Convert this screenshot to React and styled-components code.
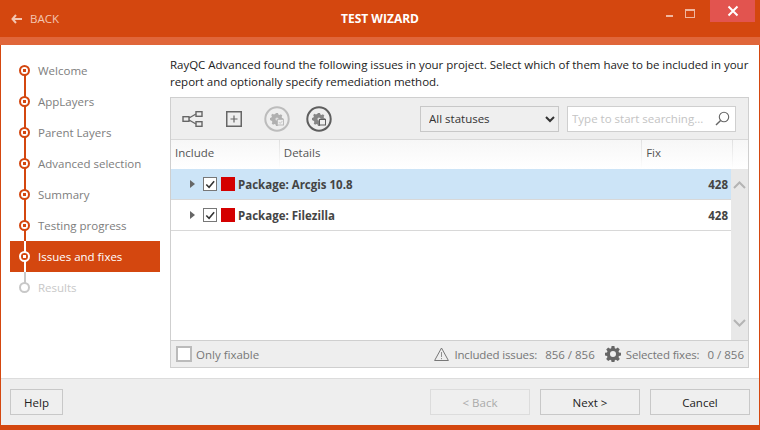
import React from 'react'
import styled, { createGlobalStyle } from 'styled-components'

const STEPS = ['Welcome', 'AppLayers', 'Parent Layers', 'Advanced selection', 'Summary', 'Testing progress', 'Issues and fixes', 'Results']
const ACTIVE = 6

const ArrowLeft = () => (
  <svg width="11" height="10" viewBox="0 0 11 10">
    <path d="M5 1 1.5 5 5 9M2 5h9" fill="none" stroke="currentColor" strokeWidth="2" />
  </svg>
)

const NetworkIcon = () => (
  <svg width="22" height="18" viewBox="0 0 22 18" fill="none" stroke="#666" strokeWidth="1.4">
    <rect x="1" y="6.7" width="6" height="4.6" />
    <rect x="14" y="1.7" width="6" height="4.6" />
    <rect x="14" y="11.7" width="6" height="4.6" />
    <path d="M7 8 14 4M7 10l7 4" />
  </svg>
)

const PlusBoxIcon = () => (
  <svg width="16" height="16" viewBox="0 0 16 16" fill="none" stroke="#666">
    <rect x="0.75" y="0.75" width="14.5" height="14.5" strokeWidth="1.5" />
    <path d="M4.5 8h7M8 4.5v7" strokeWidth="1.2" />
  </svg>
)

const CircleGear = ({ ring, gear, badge }) => (
  <svg width="26" height="26" viewBox="0 0 26 26">
    <circle cx="13" cy="13" r="11.7" fill="none" stroke={ring} strokeWidth="2" />
    <path
      fill={gear}
      d="M12 7h2l.4 1.4 1.2.5 1.3-.7 1.4 1.4-.7 1.3.5 1.2 1.4.4v2l-1.4.4-.5 1.2.7 1.3-1.4 1.4-1.3-.7-1.2.5-.4 1.4h-2l-.4-1.4-1.2-.5-1.3.7-1.4-1.4.7-1.3-.5-1.2L6 14v-2l1.4-.4.5-1.2-.7-1.3 1.4-1.4 1.3.7 1.2-.5z"
    />
    <circle cx="13" cy="13" r="1.6" fill="#ddd" />
    <rect x="13.5" y="13.5" width="6" height="5.5" fill="#eee" stroke={ring} strokeWidth="1" />
    {badge && <path d="M15 16.2l1.2 1.2 2-2.2" fill="none" stroke={ring} strokeWidth="0.9" />}
  </svg>
)

const SearchIcon = () => (
  <svg width="15" height="15" viewBox="0 0 15 15" fill="none" stroke="#666" strokeWidth="1.1">
    <circle cx="9" cy="6" r="4.7" />
    <path d="M5.6 9.4 1 14" strokeWidth="1.4" />
  </svg>
)

const Chevron = ({ up }) => (
  <svg width="13" height="8" viewBox="0 0 13 8">
    <path d={up ? 'M1 7 6.5 1.5 12 7' : 'M1 1l5.5 5.5L12 1'} fill="none" stroke="#b4b4b4" strokeWidth="2" />
  </svg>
)

const Warning = () => (
  <svg width="15" height="14" viewBox="0 0 15 14" fill="none" stroke="#777">
    <path d="M7.5 1 14.4 13.5H.6z" />
    <path d="M7.5 5v5M7.5 11v1.2" strokeWidth="0.8" />
  </svg>
)

const GearIcon = () => (
  <svg width="16" height="16" viewBox="0 0 16 16">
    <path
      fill="#666"
      fillRule="evenodd"
      d="M6.6 0h2.8l.4 2.2 1.1.5L12.8 1.4l2 2-1.3 1.9.5 1.1 2 .4v2.8l-2 .4-.5 1.1 1.3 1.9-2 2-1.9-1.3-1.1.5-.4 2H6.6l-.4-2-1.1-.5-1.9 1.3-2-2 1.3-1.9-.5-1.1-2-.4V6.8l2-.4.5-1.1-1.3-1.9 2-2 1.9 1.3 1.1-.5zM8 5a3 3 0 1 0 0 6 3 3 0 0 0 0-6z"
    />
  </svg>
)

const Tick = () => (
  <svg width="13" height="13" viewBox="0 0 13 13">
    <path d="M2.5 6.5l3 3 5.5-6.5" fill="none" stroke="#333" strokeWidth="1.7" />
  </svg>
)

const App = () => {
  return (
    <>
      <GlobalStyle />
      <Window>
        <TitleBar>
          <BackLink><ArrowLeft />BACK</BackLink>
          <Title>TEST WIZARD</Title>
          <WindowControls>
            <MinButton />
            <MaxButton />
            <CloseButton>
              <svg width="12" height="12" viewBox="0 0 12 12">
                <path d="M1.5 1.5l9 9M10.5 1.5l-9 9" stroke="#fff" strokeWidth="2" />
              </svg>
            </CloseButton>
          </WindowControls>
        </TitleBar>
        <Strip />
        <Body>
          <Sidebar>
            {STEPS.map((step, i) => (
              <Step key={step} $active={i === ACTIVE} $pending={i > ACTIVE}>
                <Rail $first={i === 0} $last={i === STEPS.length - 1} $active={i === ACTIVE} $pending={i > ACTIVE}>
                  <Dot $active={i === ACTIVE} $pending={i > ACTIVE} />
                </Rail>
                {step}
              </Step>
            ))}
          </Sidebar>
          <Main>
            <Intro>
              RayQC Advanced found the following issues in your project. Select which of them have to be included in your
              <br />
              report and optionally specify remediation method.
            </Intro>
            <Panel>
              <Toolbar>
                <ToolIcons>
                  <NetworkIcon />
                  <PlusBoxIcon />
                  <CircleGroup>
                    <CircleGear ring="#bcbcbc" gear="#b0b0b0" badge />
                    <CircleGear ring="#5e5e5e" gear="#858585" />
                  </CircleGroup>
                </ToolIcons>
                <StatusSelect defaultValue="all">
                  <option value="all">All statuses</option>
                </StatusSelect>
                <SearchBox>
                  <SearchInput placeholder="Type to start searching..." />
                  <SearchIcon />
                </SearchBox>
              </Toolbar>
              <HeaderRow>
                <HeaderCell $width={109}>Include</HeaderCell>
                <HeaderCell $width={363}>Details</HeaderCell>
                <HeaderCell $width={91}>Fix</HeaderCell>
                <HeaderCell $width={15} />
              </HeaderRow>
              <ListArea>
                <Rows>
                  <Row $selected>
                    <Expander />
                    <Check><Tick /></Check>
                    <Swatch />
                    <RowName>Package: Arcgis 10.8</RowName>
                    <RowCount>428</RowCount>
                  </Row>
                  <Row>
                    <Expander />
                    <Check><Tick /></Check>
                    <Swatch />
                    <RowName>Package: Filezilla</RowName>
                    <RowCount>428</RowCount>
                  </Row>
                </Rows>
                <ScrollBar>
                  <Chevron up />
                  <Chevron />
                </ScrollBar>
              </ListArea>
              <StatusBar>
                <EmptyCheck />
                <StatusText>Only fixable</StatusText>
                <StatusRight>
                  <Warning />
                  <StatusText $tight>Included issues:</StatusText>
                  <Count>856 / 856</Count>
                  <GearSlot><GearIcon /></GearSlot>
                  <StatusText $tight>Selected fixes:</StatusText>
                  <Count>0 / 856</Count>
                </StatusRight>
              </StatusBar>
            </Panel>
          </Main>
        </Body>
        <Footer>
          <FooterButton $width={53}>Help</FooterButton>
          <FooterRight>
            <FooterButton disabled>&lt; Back</FooterButton>
            <FooterButton>Next &gt;</FooterButton>
            <FooterButton>Cancel</FooterButton>
          </FooterRight>
        </Footer>
        <BottomEdge />
      </Window>
    </>
  )
}

export default App

const GlobalStyle = createGlobalStyle`
  html, body {
    margin: 0;
    padding: 0;
    background: #fff;
  }
  * {
    box-sizing: border-box;
  }
  body {
    font-family: "Open Sans", "Noto Sans", sans-serif;
    font-size: 11.5px;
  }
`
const Window = styled.div`
  display: flex;
  flex-direction: column;
  width: 760px;
  height: 430px;
  overflow: hidden;
  background: #fff;
`
const TitleBar = styled.div`
  display: grid;
  grid-template-columns: 1fr auto 1fr;
  height: 37px;
  background: #d4470f;
`
const BackLink = styled.div`
  display: flex;
  align-items: center;
  gap: 8px;
  padding-left: 11px;
  color: #f3c6b2;
`
const Title = styled.div`
  display: flex;
  align-items: center;
  color: #fff;
  font-size: 12px;
  font-weight: 700;
`
const WindowControls = styled.div`
  display: flex;
  justify-content: flex-end;
  align-items: flex-start;
  padding-right: 5px;
`
const MinButton = styled.div`
  width: 7px;
  height: 2px;
  margin: 15px 12px 0 0;
  background: #f0b79f;
`
const MaxButton = styled.div`
  width: 10px;
  height: 9px;
  margin: 9px 15px 0 0;
  border: 1px solid #f0b79f;
  border-top-width: 2px;
`
const CloseButton = styled.div`
  display: flex;
  justify-content: center;
  align-items: center;
  width: 45px;
  height: 22px;
  background: #e2544f;
`
const Strip = styled.div`
  height: 8px;
  background: #e0663a;
`
const Body = styled.div`
  display: flex;
  flex: 1;
  min-height: 0;
  border-left: 1px solid #d4470f;
  border-right: 1px solid #d4470f;
`
const Sidebar = styled.div`
  display: flex;
  flex-direction: column;
  width: 169px;
  padding: 10px 9px 0;
`
const Step = styled.div`
  display: flex;
  align-items: center;
  width: 150px;
  height: 31px;
  background: ${p => (p.$active ? '#d4470f' : 'transparent')};
  color: ${p => (p.$active ? '#fff' : p.$pending ? '#c8c8c8' : '#7d7d7d')};
`
const Rail = styled.div`
  display: flex;
  flex: none;
  justify-content: center;
  align-items: center;
  align-self: stretch;
  width: 29px;
  margin-right: -1px;
  background-image: linear-gradient(
    ${p => (p.$active ? '#fff' : p.$pending ? '#c8c8c8' : '#d4470f')},
    ${p => (p.$active ? '#fff' : p.$pending ? '#c8c8c8' : '#d4470f')}
  );
  background-repeat: no-repeat;
  background-size: 2px ${p => (p.$first || p.$last ? '50%' : '100%')};
  background-position: center ${p => (p.$first ? 'bottom' : 'top')};
`
const Dot = styled.div`
  width: 11px;
  height: 11px;
  border-radius: 50%;
  border: 2.5px solid ${p => (p.$active ? '#fff' : p.$pending ? '#c8c8c8' : '#d4470f')};
  background: ${p => {
    if (p.$pending) return '#fff'
    const inner = p.$active ? '#fff' : '#d4470f'
    const back = p.$active ? '#d4470f' : '#fff'
    return `radial-gradient(circle, ${inner} 0 1.5px, ${back} 2px)`
  }};
`
const Main = styled.div`
  display: flex;
  flex-direction: column;
  flex: 1;
  min-width: 0;
  padding: 10px 10px 10px 0;
`
const Intro = styled.div`
  height: 42px;
  padding-top: 1px;
  color: #222;
  line-height: 17px;
  letter-spacing: -0.02px;
  white-space: nowrap;
`
const Panel = styled.div`
  display: flex;
  flex-direction: column;
  flex: 1;
  min-height: 0;
  border: 1px solid #cfcfcf;
`
const Toolbar = styled.div`
  display: flex;
  flex: none;
  align-items: center;
  height: 42px;
  padding: 0 12px 0 11px;
  background: #eeeeee;
  border-bottom: 1px solid #d8d8d8;
`
const ToolIcons = styled.div`
  display: flex;
  flex: 1;
  align-items: center;
  gap: 22px;
`
const CircleGroup = styled.div`
  display: flex;
  gap: 16px;
`
const StatusSelect = styled.select`
  width: 139px;
  height: 26px;
  padding-left: 4px;
  margin-right: 8px;
  border: 1px solid #c8c8c8;
  border-radius: 0;
  background: #efefef;
  color: #333;
  font-family: inherit;
  font-size: 11.5px;
`
const SearchBox = styled.div`
  display: flex;
  align-items: center;
  width: 169px;
  height: 26px;
  padding: 0 5px 0 4px;
  border: 1px solid #cfcfcf;
  background: #fff;
`
const SearchInput = styled.input`
  flex: 1;
  min-width: 0;
  padding: 0;
  border: 0;
  outline: 0;
  font-family: inherit;
  font-size: 11.5px;
  &::placeholder {
    color: #c4c4c4;
    opacity: 1;
  }
`
const HeaderRow = styled.div`
  display: flex;
  flex: none;
  height: 29px;
  background: linear-gradient(#f7f7f7, #fff);
`
const HeaderCell = styled.div`
  display: flex;
  align-items: center;
  width: ${p => p.$width}px;
  padding: 0 0 5px 4px;
  background: linear-gradient(#e0e0e0, #fff) right / 1px 100% no-repeat;
  color: #555;
  &:last-child {
    background: none;
  }
`
const ListArea = styled.div`
  display: flex;
  flex: 1;
  min-height: 0;
`
const Rows = styled.div`
  flex: 1;
  min-width: 0;
`
const Row = styled.div`
  display: flex;
  align-items: center;
  height: 31px;
  padding: 0 3px 0 19px;
  background: ${p => (p.$selected ? '#cce4f7' : '#fff')};
  border-bottom: 1px solid #d8d8d8;
`
const Expander = styled.div`
  width: 0;
  height: 0;
  margin-right: 8px;
  border-left: 5px solid #666;
  border-top: 4px solid transparent;
  border-bottom: 4px solid transparent;
`
const Check = styled.div`
  display: flex;
  flex: none;
  justify-content: center;
  align-items: center;
  width: 14px;
  height: 14px;
  margin-right: 4px;
  border: 1px solid #777;
  background: #fff;
`
const Swatch = styled.div`
  flex: none;
  width: 14px;
  height: 14px;
  margin-right: 3px;
  background: #d40000;
`
const RowName = styled.div`
  flex: 1;
  color: #444;
  font-weight: 700;
`
const RowCount = styled.div`
  color: #444;
  font-weight: 700;
`
const ScrollBar = styled.div`
  display: flex;
  flex: none;
  flex-direction: column;
  justify-content: space-between;
  align-items: center;
  width: 17px;
  padding: 12px 0 13px;
  background: #e8e8e8;
`
const StatusBar = styled.div`
  display: flex;
  flex: none;
  align-items: center;
  height: 27px;
  padding: 0 4px 0 5px;
  background: #eeeeee;
  border-top: 1px solid #cfcfcf;
`
const EmptyCheck = styled.div`
  width: 16px;
  height: 16px;
  margin-right: 4px;
  border: 2px solid #bbb;
  background: #fff;
`
const StatusText = styled.div`
  color: #777;
  letter-spacing: ${p => (p.$tight ? '-0.15px' : '0')};
`
const StatusRight = styled.div`
  display: flex;
  flex: 1;
  justify-content: flex-end;
  align-items: center;
  gap: 5px;
`
const Count = styled.div`
  margin-left: 3px;
  color: #777;
`
const GearSlot = styled.div`
  display: flex;
  margin-left: 5px;
`
const Footer = styled.div`
  display: flex;
  flex: none;
  justify-content: space-between;
  align-items: center;
  height: 47px;
  padding: 0 9px;
  background: #eeeeee;
  border: 1px solid #d4470f;
  border-width: 0 1px;
  box-shadow: inset 0 1px 0 #dcdcdc;
`
const FooterRight = styled.div`
  display: flex;
  gap: 10px;
`
const FooterButton = styled.button`
  width: ${p => p.$width || 100}px;
  height: 26px;
  padding: 2px 0 0;
  border: 1px solid #c8c8c8;
  background: #efefef;
  color: #222;
  font-family: inherit;
  font-size: 11.5px;
  &:disabled {
    border-color: #dcdcdc;
    color: #aaa;
  }
`
const BottomEdge = styled.div`
  flex: none;
  height: 5px;
  background: #d4470f;
`
